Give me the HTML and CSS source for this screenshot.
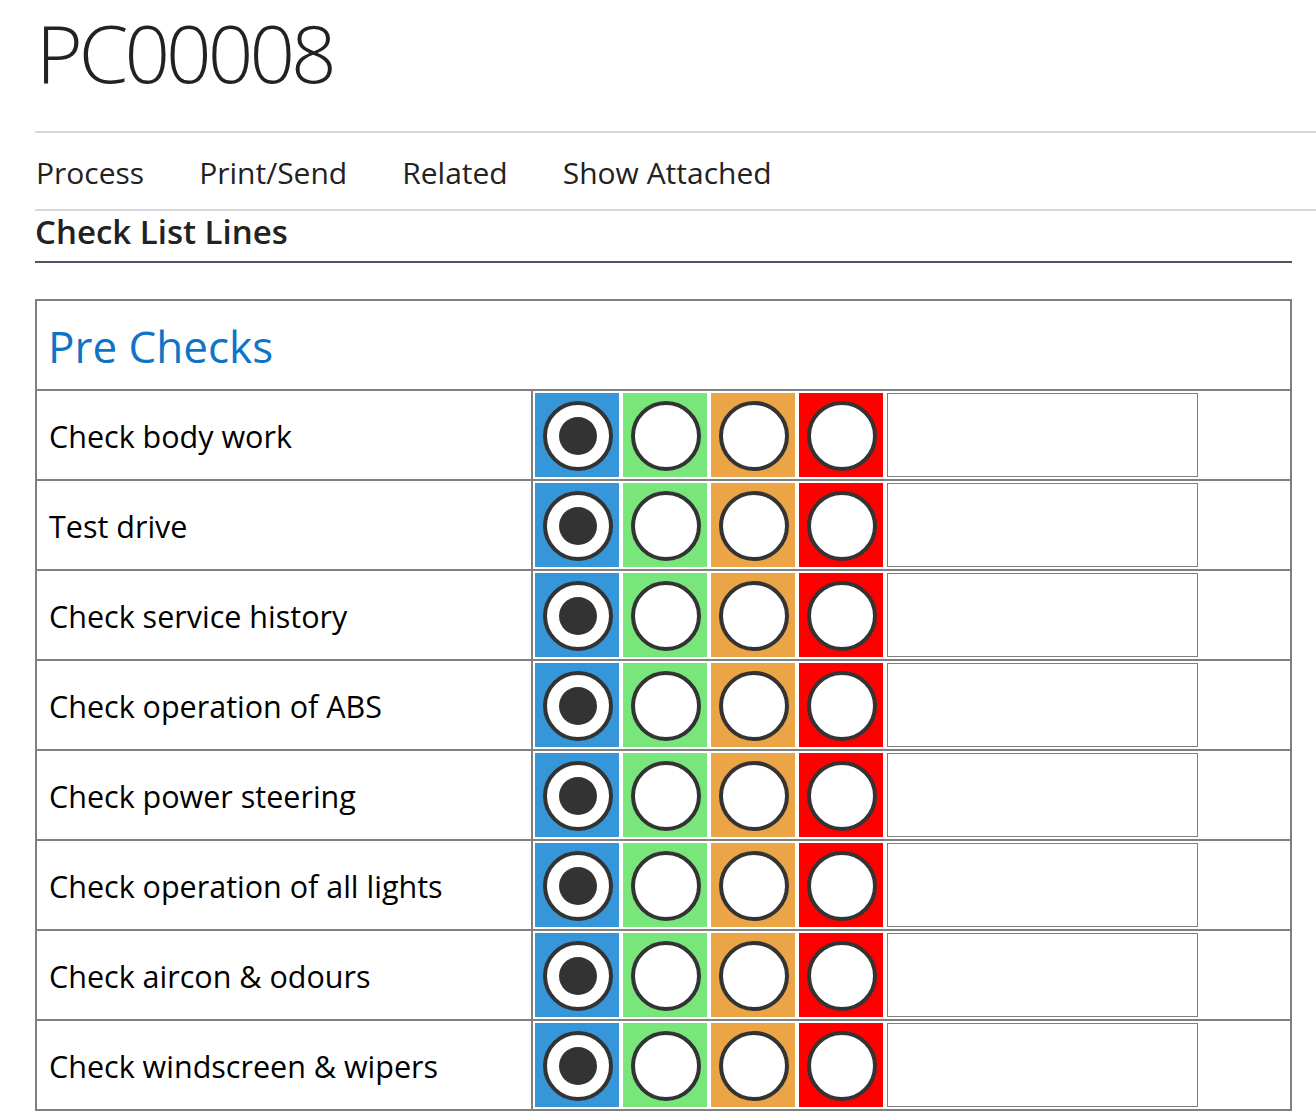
FILE: index.html
```html
<!DOCTYPE html>
<html>
<head>
<meta charset="utf-8">
<link rel="stylesheet" href="styles.css">
</head>
<body>
<div class="page">
  <div class="titlebar"><h1 class="title">PC00008</h1></div>
  <nav class="menu">
    <span class="menu-item">Process</span>
    <span class="menu-item">Print/Send</span>
    <span class="menu-item">Related</span>
    <span class="menu-item">Show Attached</span>
  </nav>
  <div class="section">
    <h2 class="section-title">Check List Lines</h2>
    <div class="checklist">
      <div class="group-head">Pre Checks</div>
      <div class="row"><div class="label">Check body work</div><div class="opts"><div class="opt blue"><span class="radio on"></span></div><div class="opt green"><span class="radio"></span></div><div class="opt orange"><span class="radio"></span></div><div class="opt red"><span class="radio"></span></div><div class="note"></div></div></div>
      <div class="row"><div class="label">Test drive</div><div class="opts"><div class="opt blue"><span class="radio on"></span></div><div class="opt green"><span class="radio"></span></div><div class="opt orange"><span class="radio"></span></div><div class="opt red"><span class="radio"></span></div><div class="note"></div></div></div>
      <div class="row"><div class="label">Check service history</div><div class="opts"><div class="opt blue"><span class="radio on"></span></div><div class="opt green"><span class="radio"></span></div><div class="opt orange"><span class="radio"></span></div><div class="opt red"><span class="radio"></span></div><div class="note"></div></div></div>
      <div class="row"><div class="label">Check operation of ABS</div><div class="opts"><div class="opt blue"><span class="radio on"></span></div><div class="opt green"><span class="radio"></span></div><div class="opt orange"><span class="radio"></span></div><div class="opt red"><span class="radio"></span></div><div class="note"></div></div></div>
      <div class="row"><div class="label">Check power steering</div><div class="opts"><div class="opt blue"><span class="radio on"></span></div><div class="opt green"><span class="radio"></span></div><div class="opt orange"><span class="radio"></span></div><div class="opt red"><span class="radio"></span></div><div class="note"></div></div></div>
      <div class="row"><div class="label">Check operation of all lights</div><div class="opts"><div class="opt blue"><span class="radio on"></span></div><div class="opt green"><span class="radio"></span></div><div class="opt orange"><span class="radio"></span></div><div class="opt red"><span class="radio"></span></div><div class="note"></div></div></div>
      <div class="row"><div class="label">Check aircon &amp; odours</div><div class="opts"><div class="opt blue"><span class="radio on"></span></div><div class="opt green"><span class="radio"></span></div><div class="opt orange"><span class="radio"></span></div><div class="opt red"><span class="radio"></span></div><div class="note"></div></div></div>
      <div class="row"><div class="label">Check windscreen &amp; wipers</div><div class="opts"><div class="opt blue"><span class="radio on"></span></div><div class="opt green"><span class="radio"></span></div><div class="opt orange"><span class="radio"></span></div><div class="opt red"><span class="radio"></span></div><div class="note"></div></div></div>
    </div>
  </div>
</div>
</body>
</html>
```

FILE: styles.css
```css
html, body {
  margin: 0;
  padding: 0;
  background: #ffffff;
}
body {
  font-family: "Open Sans", "Noto Sans", "Liberation Sans", sans-serif;
  color: #222222;
  overflow: hidden;
}
.page {
  margin-left: 35px;
}
.titlebar {
  height: 133px;
  box-sizing: border-box;
  border-bottom: 2px solid #d5d8dc;
}
.title {
  margin: 0;
  padding: 0 0 0 1px;
  font-size: 80px;
  font-weight: 300;
  line-height: 104px;
  color: #222222;
  letter-spacing: -4px;
}
.menu {
  display: flex;
  gap: 55px;
  height: 78px;
  box-sizing: border-box;
  align-items: center;
  padding: 2px 0 0 1px;
  border-bottom: 2px solid #d5d8dc;
}
.menu-item {
  font-size: 30px;
  color: #222222;
}
.section {
  width: 1257px;
}
.section-title {
  margin: 0;
  height: 52px;
  box-sizing: border-box;
  border-bottom: 2px solid #4d5664;
  font-size: 33px;
  font-weight: 600;
  line-height: 42px;
  color: #222222;
}
.checklist {
  margin-top: 36px;
  border: 2px solid #808080;
}
.group-head {
  height: 88px;
  box-sizing: border-box;
  padding: 15px 0 0 11px;
  font-size: 44px;
  color: #0e74c7;
  line-height: 60px;
}
.row {
  display: flex;
  height: 90px;
  border-top: 2px solid #808080;
  box-sizing: border-box;
}
.label {
  width: 496px;
  border-right: 2px solid #808080;
  display: flex;
  align-items: center;
  padding: 2px 0 0 12px;
  box-sizing: border-box;
  font-size: 30.5px;
  color: #000000;
}
.opts {
  display: flex;
  gap: 4px;
  padding: 2px;
}
.opt {
  width: 84px;
  height: 84px;
  box-sizing: border-box;
  padding: 8px 6px 6px 8px;
}
.blue { background: #3597da; }
.green { background: #78e67a; }
.orange { background: #eba446; }
.red { background: #ff0000; }
.radio {
  display: flex;
  align-items: center;
  justify-content: center;
  width: 70px;
  height: 70px;
  box-sizing: border-box;
  border: 4px solid #333333;
  border-radius: 50%;
  background: #ffffff;
}
.radio.on::after {
  content: "";
  width: 38px;
  height: 38px;
  border-radius: 50%;
  background: #333333;
}
.note {
  width: 311px;
  height: 84px;
  box-sizing: border-box;
  border: 1px solid #808080;
  background: #ffffff;
}
```
